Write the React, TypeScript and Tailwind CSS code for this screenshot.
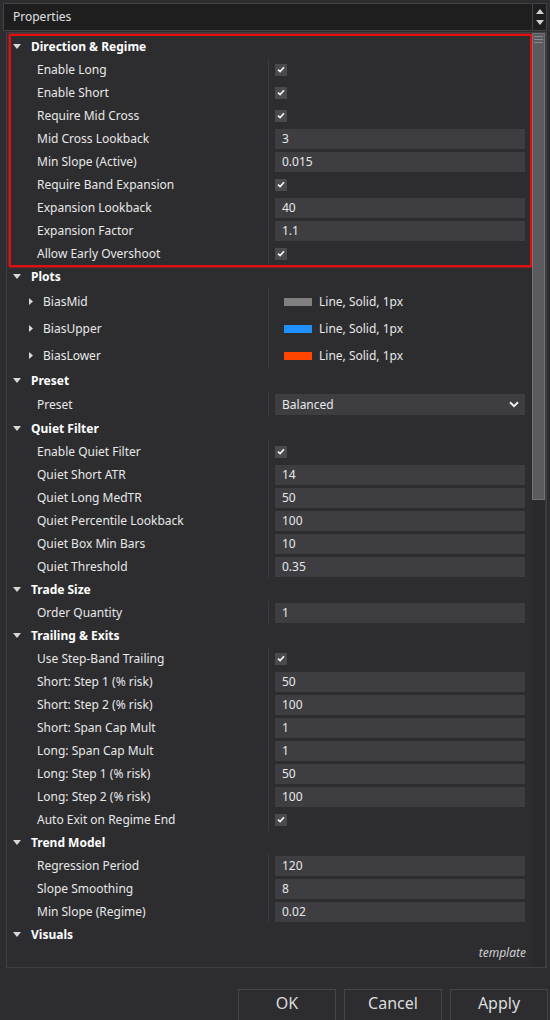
import React from "react";

type Item =
  | { kind: "check"; label: string }
  | { kind: "text"; label: string; value: string }
  | { kind: "plot"; label: string; color: string }
  | { kind: "select"; label: string; value: string };

type Group = { title: string; items: Item[]; marked?: boolean };

const GROUPS: Group[] = [
  {
    title: "Direction & Regime",
    marked: true,
    items: [
      { kind: "check", label: "Enable Long" },
      { kind: "check", label: "Enable Short" },
      { kind: "check", label: "Require Mid Cross" },
      { kind: "text", label: "Mid Cross Lookback", value: "3" },
      { kind: "text", label: "Min Slope (Active)", value: "0.015" },
      { kind: "check", label: "Require Band Expansion" },
      { kind: "text", label: "Expansion Lookback", value: "40" },
      { kind: "text", label: "Expansion Factor", value: "1.1" },
      { kind: "check", label: "Allow Early Overshoot" },
    ],
  },
  {
    title: "Plots",
    items: [
      { kind: "plot", label: "BiasMid", color: "#808080" },
      { kind: "plot", label: "BiasUpper", color: "#1e90ff" },
      { kind: "plot", label: "BiasLower", color: "#ff4500" },
    ],
  },
  { title: "Preset", items: [{ kind: "select", label: "Preset", value: "Balanced" }] },
  {
    title: "Quiet Filter",
    items: [
      { kind: "check", label: "Enable Quiet Filter" },
      { kind: "text", label: "Quiet Short ATR", value: "14" },
      { kind: "text", label: "Quiet Long MedTR", value: "50" },
      { kind: "text", label: "Quiet Percentile Lookback", value: "100" },
      { kind: "text", label: "Quiet Box Min Bars", value: "10" },
      { kind: "text", label: "Quiet Threshold", value: "0.35" },
    ],
  },
  { title: "Trade Size", items: [{ kind: "text", label: "Order Quantity", value: "1" }] },
  {
    title: "Trailing & Exits",
    items: [
      { kind: "check", label: "Use Step-Band Trailing" },
      { kind: "text", label: "Short: Step 1 (% risk)", value: "50" },
      { kind: "text", label: "Short: Step 2 (% risk)", value: "100" },
      { kind: "text", label: "Short: Span Cap Mult", value: "1" },
      { kind: "text", label: "Long: Span Cap Mult", value: "1" },
      { kind: "text", label: "Long: Step 1 (% risk)", value: "50" },
      { kind: "text", label: "Long: Step 2 (% risk)", value: "100" },
      { kind: "check", label: "Auto Exit on Regime End" },
    ],
  },
  {
    title: "Trend Model",
    items: [
      { kind: "text", label: "Regression Period", value: "120" },
      { kind: "text", label: "Slope Smoothing", value: "8" },
      { kind: "text", label: "Min Slope (Regime)", value: "0.02" },
    ],
  },
  { title: "Visuals", items: [] },
];

function TriDown() {
  return (
    <svg width="8" height="5" viewBox="0 0 8 5" className="shrink-0">
      <path d="M0 0 H8 L4 5 Z" fill="#d8d8d8" />
    </svg>
  );
}

function TriRight() {
  return (
    <svg width="4" height="7" viewBox="0 0 4 7" className="shrink-0">
      <path d="M0 0 L4 3.5 L0 7 Z" fill="#d8d8d8" />
    </svg>
  );
}

function Check() {
  return (
    <div className="w-[12px] h-[12px] bg-[#4a4a4e] flex items-center justify-center">
      <svg width="8" height="7" viewBox="0 0 8 7">
        <path d="M1 3.6 L3.1 5.6 L7 1.2" stroke="#f4f4f4" strokeWidth="1.7" fill="none" />
      </svg>
    </div>
  );
}

function Value({ item }: { item: Item }) {
  if (item.kind === "check") return <Check />;
  if (item.kind === "plot")
    return (
      <div className="flex items-center pl-[9px]">
        <div className="w-[28px] h-[8px]" style={{ backgroundColor: item.color }} />
        <span className="ml-[7px]">Line, Solid, 1px</span>
      </div>
    );
  if (item.kind === "select")
    return (
      <div className="w-full h-[21px] bg-[#3e3e42] pl-[7px] pr-[6px] flex items-center justify-between">
        <span>{item.value}</span>
        <svg width="10" height="7" viewBox="0 0 10 7">
          <path d="M1 1.2 L5 5.2 L9 1.2" stroke="#f0f0f0" strokeWidth="2" fill="none" />
        </svg>
      </div>
    );
  return (
    <div className="w-full h-[20px] bg-[#3e3e42] px-[7px] flex items-center">{item.value}</div>
  );
}

function Row({ item }: { item: Item }) {
  const h = item.kind === "plot" ? "h-[27px]" : item.kind === "select" ? "h-[25px]" : "h-[23px]";
  return (
    <div className={`flex items-center ${h}`}>
      {item.kind === "plot" ? (
        <div className="w-[261px] flex items-center pl-[22px]">
          <TriRight />
          <span className="ml-[10px]">{item.label}</span>
        </div>
      ) : (
        <div className="w-[261px] pl-[30px]">{item.label}</div>
      )}
      <div className="flex-1 h-full border-l border-[#3b3b3f] flex items-center pl-[6px] pr-[7px]">
        <Value item={item} />
      </div>
    </div>
  );
}

function GroupBlock({ g }: { g: Group }) {
  return (
    <div className="relative">
      <div className="h-[23px] flex items-center pl-[6px]">
        <TriDown />
        <span className="ml-[10px] font-bold text-white">{g.title}</span>
      </div>
      {g.items.map(it => (
        <Row key={it.label} item={it} />
      ))}
      {g.marked && (
        <div className="absolute left-[2px] -top-[1px] w-[523px] h-[233px] border-2 border-[#e10f12] shadow-[0_0_2px_#ff2020] pointer-events-none" />
      )}
    </div>
  );
}

export default function App() {
  return (
    <div
      className="w-[550px] h-[1020px] bg-[#2d2d30] text-[12px] text-[#e8e8e8] overflow-hidden"
      style={{ fontFamily: '"Noto Sans", "Open Sans", sans-serif' }}
    >
      {/* title strip */}
      <div className="flex pt-[3px] pl-[3px]">
        <div className="w-[530px] h-[28px] bg-[#1e1e1e] border border-[#424246] flex items-center pl-[9px] text-[#e0e0e0]">
          Properties
        </div>
        <div className="w-[14px] h-[28px] bg-[#1e1e1e] border border-l-0 border-[#424246] flex flex-col items-center justify-center gap-[6px]">
          <svg width="8" height="5" viewBox="0 0 8 5">
            <path d="M0 5 H8 L4 0 Z" fill="#d0d0d0" />
          </svg>
          <svg width="8" height="5" viewBox="0 0 8 5">
            <path d="M0 0 H8 L4 5 Z" fill="#d0d0d0" />
          </svg>
        </div>
      </div>

      {/* property grid */}
      <div className="ml-[6px] mt-[1px] w-[541px] h-[936px] border border-[#3f3f44] flex">
        <div className="w-[525px] flex flex-col">
          <div className="flex-1 pt-[2px] overflow-hidden">
            {GROUPS.map(g => (
              <GroupBlock key={g.title} g={g} />
            ))}
          </div>
          <div className="h-[23px] flex items-start justify-end pr-[6px] italic text-[#d0d0d0]">template</div>
        </div>
        <div className="w-[14px] bg-[#2a2a2d] border-r border-[#3a3a3e]">
          <div className="h-[467px] bg-[#5b5b5f] border border-[#737377] flex flex-col items-center pt-[2px] gap-[2px]">
            <div className="w-[9px] h-px bg-[#8a8a8e]" />
            <div className="w-[9px] h-px bg-[#8a8a8e]" />
            <div className="w-[9px] h-px bg-[#8a8a8e]" />
          </div>
        </div>
      </div>

      {/* buttons */}
      <div className="flex justify-end gap-[8px] pr-[2px] mt-[21px]">
        {["OK", "Cancel", "Apply"].map(b => (
          <button
            key={b}
            className="w-[98px] h-[36px] border border-[#45454a] bg-[#2d2d30] text-[16px] leading-[22px] text-[#dcdcdc] flex items-start justify-center pt-[2px]"
          >
            {b}
          </button>
        ))}
      </div>
    </div>
  );
}
